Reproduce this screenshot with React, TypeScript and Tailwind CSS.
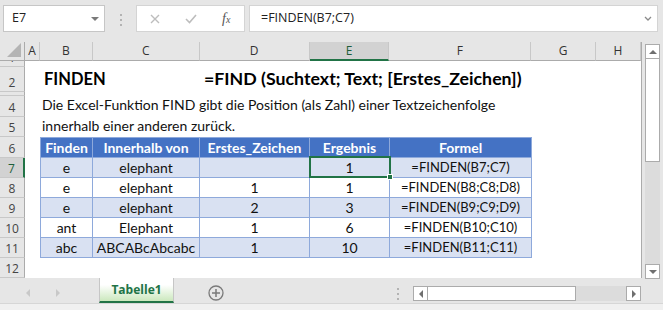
import type { ReactNode } from 'react';

// column widths include the 1px right border, same as excel's grid
const COLS = [
  { k: 'A', w: 'w-[15px]' },
  { k: 'B', w: 'w-[53px]' },
  { k: 'C', w: 'w-[107px]' },
  { k: 'D', w: 'w-[110px]' },
  { k: 'E', w: 'w-[80px]' },
  { k: 'F', w: 'w-[142px]' },
  { k: 'G', w: 'w-[65px]' },
  { k: 'H', w: 'w-[45px]' },
];

const TABLE_HEAD = ['Finden', 'Innerhalb von', 'Erstes_Zeichen', 'Ergebnis', 'Formel'];

const TABLE_ROWS = [
  { n: 7, cells: ['e', 'elephant', '', '1', '=FINDEN(B7;C7)'] },
  { n: 8, cells: ['e', 'elephant', '1', '1', '=FINDEN(B8;C8;D8)'] },
  { n: 9, cells: ['e', 'elephant', '2', '3', '=FINDEN(B9;C9;D9)'] },
  { n: 10, cells: ['ant', 'Elephant', '1', '6', '=FINDEN(B10;C10)'] },
  { n: 11, cells: ['abc', 'ABCABcAbcabc', '1', '10', '=FINDEN(B11;C11)'] },
];

const ui = "font-['Open_Sans','Noto_Sans',sans-serif]";
const cell = "font-['Lato','Liberation_Sans',sans-serif]";

function RowHead({ n, h, active }: { n?: number; h: string; active?: boolean }) {
  return (
    <div
      className={`${h} ${ui} flex w-[25px] shrink-0 items-end justify-center overflow-hidden border-b border-[#c8c8c8] text-[12px] leading-[16px] ${
        active
          ? 'border-r-2 border-r-[#217346] bg-[#d2d2d2] text-[#1e5e3a]'
          : 'border-r border-r-[#ababab] bg-[#e6e6e6] text-[#444]'
      }`}
    >
      {n}
    </div>
  );
}

function Row({ n, h, active, children }: { n?: number; h: string; active?: boolean; children?: ReactNode }) {
  return (
    <div className={`${h} flex`}>
      <RowHead n={n} h={h} active={active} />
      <div className="flex flex-1 bg-white">{children}</div>
    </div>
  );
}

function TableRow({ n, cells }: { n: number; cells: string[] }) {
  const band = n % 2 === 1 ? 'bg-[#d9e1f2]' : 'bg-white';
  return (
    <Row n={n} h="h-[20px]" active={n === 7}>
      <div className="w-[15px]" />
      {cells.map((c, i) => (
        <div
          key={i}
          className={`${COLS[i + 1].w} ${band} ${cell} relative flex items-center justify-center border-r border-b border-[#8ea9db] text-[#111] ${
            i === 0 ? 'border-l' : ''
          } ${i === 4 ? 'text-[13px]' : 'text-[14px]'}`}
        >
          {c}
          {n === 7 && i === 3 && (
            <div className="absolute -top-[2px] -right-[2px] -bottom-[1px] -left-[1px] z-10 border-2 border-[#217346]">
              <div className="absolute -right-[4px] -bottom-[4px] h-[6px] w-[6px] border border-white bg-[#217346]" />
            </div>
          )}
        </div>
      ))}
    </Row>
  );
}

function Arrow({ dir, color = '#8a8a8a' }: { dir: 'l' | 'r' | 'u' | 'd'; color?: string }) {
  const d = {
    l: 'M5 0 L5 8 L1 4 Z',
    r: 'M1 0 L1 8 L5 4 Z',
    u: 'M0 5 L8 5 L4 1 Z',
    d: 'M0 1 L8 1 L4 5 Z',
  }[dir];
  const horiz = dir === 'l' || dir === 'r';
  return (
    <svg width={horiz ? 6 : 8} height={horiz ? 8 : 6} viewBox={horiz ? '0 0 6 8' : '0 0 8 6'}>
      <path d={d} fill={color} />
    </svg>
  );
}

function Dots({ className }: { className?: string }) {
  return (
    <div className={`flex flex-col gap-[3px] ${className ?? ''}`}>
      <span className="h-[2px] w-[2px] bg-[#b3b3b3]" />
      <span className="h-[2px] w-[2px] bg-[#b3b3b3]" />
      <span className="h-[2px] w-[2px] bg-[#b3b3b3]" />
    </div>
  );
}

export default function App() {
  return (
    <div className="flex h-[310px] w-[663px] flex-col overflow-hidden bg-[#e6e6e6]">
      {/* formula bar */}
      <div className="flex h-[42px] shrink-0 items-start pt-[5px]">
        <div className="ml-[3px] flex h-[27px] w-[102px] items-center justify-between border border-[#c6c6c6] bg-white pr-[5px] pl-[8px]">
          <span className={`${ui} text-[12.5px] text-[#222]`}>E7</span>
          <Arrow dir="d" color="#7a7a7a" />
        </div>
        <Dots className="mt-[9px] ml-[15px]" />
        <div className="ml-[14px] flex h-[27px] w-[109px] items-center border border-[#d4d4d4] bg-white pl-[13px]">
          <svg width="10" height="10" viewBox="0 0 10 10">
            <path d="M1 1 L9 9 M9 1 L1 9" stroke="#bdbdbd" strokeWidth="1.4" />
          </svg>
          <svg className="ml-[25px]" width="12" height="10" viewBox="0 0 12 10">
            <path d="M1 5 L4.5 8.5 L11 1" stroke="#bdbdbd" strokeWidth="1.6" fill="none" />
          </svg>
          <span className="ml-[25px] font-['Liberation_Serif',serif] text-[14px] text-[#555] italic">
            f<span className="text-[10px]">x</span>
          </span>
        </div>
        <div className="ml-[4px] flex h-[27px] w-[409px] items-center justify-between border border-[#d4d4d4] bg-white pr-[5px] pl-[11px]">
          <span className={`${ui} text-[12.5px] text-[#222]`}>=FINDEN(B7;C7)</span>
          <svg width="8" height="5" viewBox="0 0 8 5">
            <path d="M1 1 L4 4 L7 1" stroke="#8a8a8a" strokeWidth="1.3" fill="none" />
          </svg>
        </div>
      </div>

      {/* sheet + vertical scrollbar */}
      <div className="flex h-[236px] shrink-0">
        <div className="flex w-[642px] flex-col border-r border-b border-[#ababab]">
          {/* column headers */}
          <div className="flex h-[19px]">
            <div className="flex w-[25px] items-end justify-end border-r border-b border-[#ababab] bg-[#e6e6e6] pr-[3px] pb-[3px]">
              <svg width="14" height="14" viewBox="0 0 14 14">
                <path d="M14 0 L14 14 L0 14 Z" fill="#b4b4b4" />
              </svg>
            </div>
            {COLS.map((c) => (
              <div
                key={c.k}
                className={`${c.w} ${ui} flex items-center justify-center border-r border-r-[#c8c8c8] text-[12px] ${
                  c.k === 'E'
                    ? 'border-b-2 border-b-[#217346] bg-[#d2d2d2] text-[#1e5e3a]'
                    : 'border-b border-b-[#ababab] bg-[#e6e6e6] text-[#333]'
                }`}
              >
                {c.k}
              </div>
            ))}
          </div>

          <Row n={1} h="h-[6px]" />
          <Row n={2} h="h-[25px]">
            <div className={`${cell} flex w-full items-baseline self-end pb-[2px] leading-[22px] font-bold text-black`}>
              <div className="w-[175px] pl-[19px] text-[16.5px]">FINDEN</div>
              <div className="pl-[4px] text-[17.75px]">=FIND (Suchtext; Text; [Erstes_Zeichen])</div>
            </div>
          </Row>
          <Row h="h-[4px]" />
          <Row n={4} h="h-[21px]">
            <div className={`${cell} flex items-end pb-[2px] pl-[17px] text-[14px] text-[#111]`}>
              Die Excel-Funktion FIND gibt die Position (als Zahl) einer Textzeichenfolge
            </div>
          </Row>
          <Row n={5} h="h-[20px]">
            <div className={`${cell} flex items-end pb-[1px] pl-[17px] text-[14px] text-[#111]`}>
              innerhalb einer anderen zurück.
            </div>
          </Row>
          <Row n={6} h="h-[21px]">
            <div className="w-[15px]" />
            {TABLE_HEAD.map((t, i) => (
              <div
                key={t}
                className={`${COLS[i + 1].w} ${cell} flex items-center justify-center border-t border-r border-b border-[#8ea9db] bg-[#4472c4] text-[14px] font-bold text-white ${
                  i === 0 ? 'border-l' : ''
                }`}
              >
                {t}
              </div>
            ))}
          </Row>
          {TABLE_ROWS.map((r) => (
            <TableRow key={r.n} n={r.n} cells={r.cells} />
          ))}
          <Row n={12} h="h-[20px]" />
        </div>

        {/* vertical scrollbar */}
        <div className="mt-[2px] ml-[3px] flex h-[235px] w-[15px] flex-col bg-[#dcdcdc]">
          <div className="flex h-[15px] items-center justify-center border border-[#ababab] bg-white">
            <Arrow dir="u" color="#6f6f6f" />
          </div>
          <div className="h-[103px] border-x border-b border-[#ababab] bg-white" />
          <div className="flex-1" />
          <div className="flex h-[15px] items-center justify-center border border-[#ababab] bg-white">
            <Arrow dir="d" color="#6f6f6f" />
          </div>
        </div>
      </div>

      {/* sheet tabs + horizontal scrollbar */}
      <div className="flex h-[25px] shrink-0 items-start">
        <div className="mt-[11px] ml-[25px]">
          <Arrow dir="l" color="#c8c8c8" />
        </div>
        <div className="mt-[11px] ml-[24px]">
          <Arrow dir="r" color="#c8c8c8" />
        </div>
        <div className="ml-[38px] flex h-[25px] w-[75px] items-center justify-center border-x border-b-2 border-x-[#c6c6c6] border-b-[#217346] bg-linear-to-b from-white from-30% to-[#cbe8bd]">
          <span className={`${ui} text-[12px] font-bold text-[#217346]`}>Tabelle1</span>
        </div>
        <svg className="mt-[7px] ml-[34px]" width="16" height="16" viewBox="0 0 16 16">
          <circle cx="8" cy="8" r="7" fill="none" stroke="#7a7a7a" strokeWidth="1.3" />
          <path d="M8 4 V12 M4 8 H12" stroke="#7a7a7a" strokeWidth="1.5" />
        </svg>
        <Dots className="mt-[10px] ml-[173px]" />
        <div className="mt-[8px] ml-[14px] flex h-[15px] w-[228px] bg-[#dcdcdc]">
          <div className="flex w-[15px] items-center justify-center border border-[#ababab] bg-white">
            <Arrow dir="l" color="#6f6f6f" />
          </div>
          <div className="w-[148px] border-y border-r border-[#ababab] bg-white" />
          <div className="flex-1" />
          <div className="flex w-[15px] items-center justify-center border border-[#ababab] bg-white">
            <Arrow dir="r" color="#6f6f6f" />
          </div>
        </div>
      </div>
      <div className="flex-1 border-t border-[#d6d6d6] bg-[#f0f0f0]" />
    </div>
  );
}
